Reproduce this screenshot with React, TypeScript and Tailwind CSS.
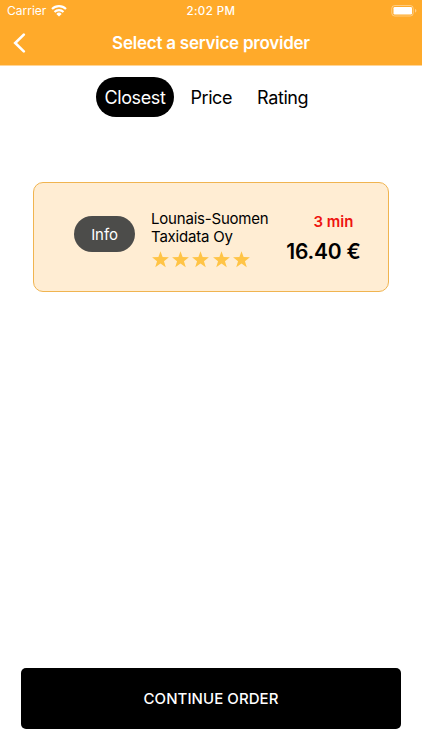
import { useState } from 'react';

type SortKey = 'Closest' | 'Price' | 'Rating';

interface Provider {
  id: string;
  name: string;
  rating: number;
  eta: string;
  price: string;
}

const SORT_OPTIONS: SortKey[] = ['Closest', 'Price', 'Rating'];

const PROVIDERS: Provider[] = [
  {
    id: 'taxidata',
    name: 'Lounais-Suomen Taxidata Oy',
    rating: 5,
    eta: '3 min',
    price: '16.40 €',
  },
];

function WifiIcon() {
  return (
    <svg width="16" height="12" viewBox="0 0 16 12" fill="none" stroke="currentColor" strokeWidth="2.1">
      <path d="M1 4a10 10 0 0 1 14 0" />
      <path d="M3.5 7a6.4 6.4 0 0 1 9 0" />
      <path d="M8 11.5 5.3 8.900a3.9 3.9 0 0 1 5.400 0Z" fill="currentColor" stroke="none" />
    </svg>
  );
}

function BatteryIcon() {
  return (
    <svg width="26" height="12" viewBox="0 0 26 12" fill="none">
      <rect x="0.75" y="0.5" width="21.5" height="10.5" rx="3" stroke="#fff" strokeOpacity="0.4" />
      <rect x="2.5" y="2" width="18.5" height="7.5" rx="1.2" fill="#fff" />
      <path d="M24 4v3.6c.9-.3 1.4-1 1.4-1.8S24.9 4.3 24 4Z" fill="#fff" fillOpacity="0.45" />
    </svg>
  );
}

function Star() {
  return (
    <svg width="17" height="17" viewBox="0 0 24 24" fill="#ffc446">
      <path d="M12 .2l3 8.4 8.9.3-7 5.4 2.5 8.6L12 17.800l-7.400 5.100 2.500-8.600-7-5.400 8.900-.3Z" />
    </svg>
  );
}

function StatusBar() {
  return (
    <div className="grid h-[21px] grid-cols-3 items-center pt-px text-[12px] leading-none">
      <div className="flex items-center gap-[5px] pl-[7px]">
        <span>Carrier</span>
        <WifiIcon />
      </div>
      <span className="pt-px text-center text-[11.5px] font-medium tracking-[0.45px]">2:02 PM</span>
      <div className="flex justify-end pr-[5px]">
        <BatteryIcon />
      </div>
    </div>
  );
}

function ProviderCard({ provider }: { provider: Provider }) {
  return (
    <div className="mx-[33px] flex h-[110px] items-start rounded-[10px] border border-[#f0b450] bg-[#ffedd3]">
      <button className="mt-[33.5px] ml-[40px] h-[36px] w-[61px] rounded-full bg-[#4c4c4a] pt-[2px] text-[15px] tracking-[-0.1px] text-white">
        Info
      </button>
      <div className="mt-[27.5px] ml-[16px] w-[122px]">
        <p className="text-[15px] leading-[18px] tracking-[-0.2px]">{provider.name}</p>
        <div className="mt-[5px] ml-[0.5px] flex gap-[3.4px]">
          {Array.from({ length: provider.rating }, (_, i) => (
            <Star key={i} />
          ))}
        </div>
      </div>
      <div className="mt-[29.5px] ml-[10.5px] flex w-[80px] flex-col items-center">
        <span className="ml-[20px] text-[15px] leading-[20px] font-semibold text-[#ee1410]">{provider.eta}</span>
        <span className="mt-[7px] text-[21px] leading-[26px] font-semibold tracking-[-0.2px]">{provider.price}</span>
      </div>
    </div>
  );
}

export default function App() {
  const [sortBy, setSortBy] = useState<SortKey>('Closest');

  return (
    <div className="flex h-[750px] w-[422px] flex-col bg-white font-['Inter',sans-serif] text-black">
      <header className="h-[66px] border-b border-[#ffd597] bg-[#ffaa2a] text-white">
        <StatusBar />
        <div className="grid h-[44px] grid-cols-[40px_1fr_40px] items-center">
          <button className="pl-[13px]" aria-label="Back">
            <svg width="14" height="20" viewBox="0 0 14 20" fill="none" stroke="currentColor" strokeWidth="2.6">
              <path d="M10.8 1.6 2.2 10l8.6 8.4" strokeLinecap="round" strokeLinejoin="miter" />
            </svg>
          </button>
          <h1 className="pt-[2px] text-center text-[17px] font-semibold tracking-[-0.24px]">Select a service provider</h1>
        </div>
      </header>

      <nav className="mt-[11px] ml-[96px] flex h-[40px] gap-[8px]">
        {SORT_OPTIONS.map((option) => (
          <button
            key={option}
            onClick={() => setSortBy(option)}
            className={`h-[40px] rounded-full px-[8.5px] text-[18px] tracking-[-0.4px] ${
              sortBy === option ? 'bg-black text-white' : ''
            }`}
          >
            {option}
          </button>
        ))}
      </nav>

      <main className="mt-[64.5px] flex-1">
        {PROVIDERS.map((provider) => (
          <ProviderCard key={provider.id} provider={provider} />
        ))}
      </main>

      <footer className="px-[21px] pb-[21px]">
        <button className="h-[61px] w-full rounded-[5px] bg-black pt-[2px] text-[15px] font-medium tracking-[0.06px] text-white">
          CONTINUE ORDER
        </button>
      </footer>
    </div>
  );
}
